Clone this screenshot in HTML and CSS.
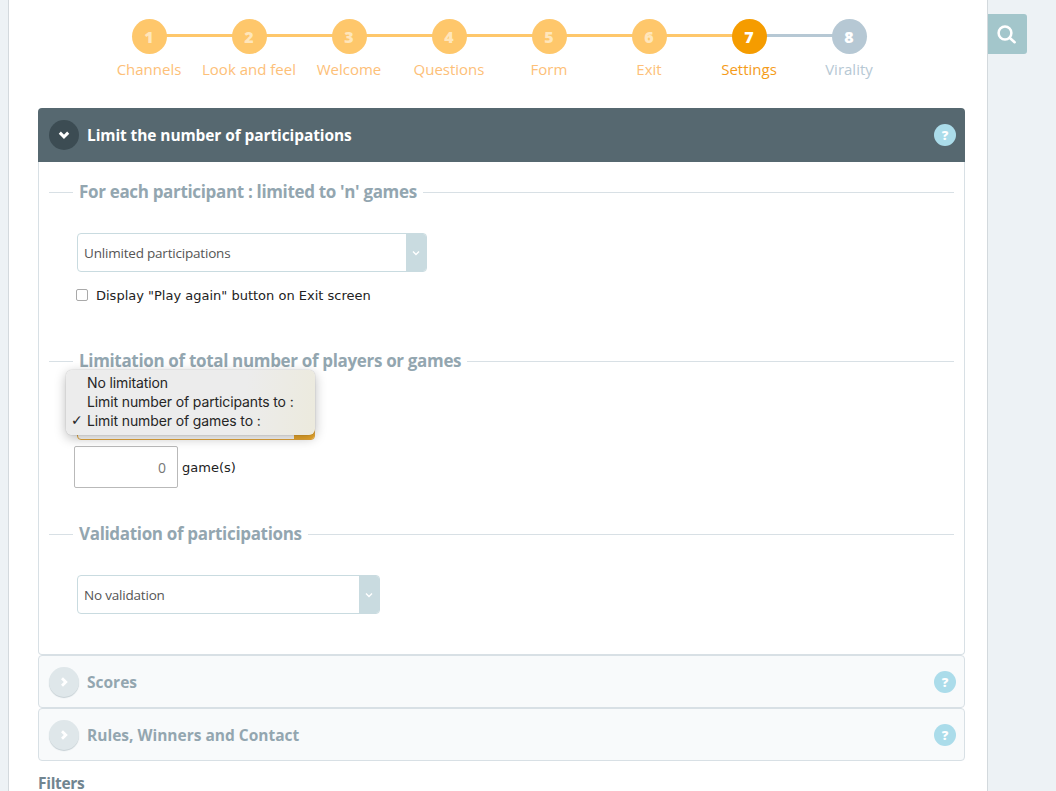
FILE: index.html
```html
<!DOCTYPE html>
<html lang="en">
<head>
<meta charset="utf-8">
<title>Settings</title>
<link rel="stylesheet" href="styles.css">
</head>
<body>
<div class="page">
  <div class="gutter"></div>
  <main class="main">
    <nav class="stepper">
      <div class="step done"><span class="line"></span><span class="dot">1</span><span class="label">Channels</span></div>
      <div class="step done"><span class="line"></span><span class="dot">2</span><span class="label">Look and feel</span></div>
      <div class="step done"><span class="line"></span><span class="dot">3</span><span class="label">Welcome</span></div>
      <div class="step done"><span class="line"></span><span class="dot">4</span><span class="label">Questions</span></div>
      <div class="step done"><span class="line"></span><span class="dot">5</span><span class="label">Form</span></div>
      <div class="step done"><span class="line"></span><span class="dot">6</span><span class="label">Exit</span></div>
      <div class="step active"><span class="line"></span><span class="dot">7</span><span class="label">Settings</span></div>
      <div class="step todo"><span class="dot">8</span><span class="label">Virality</span></div>
    </nav>

    <section class="panel-head open">
      <span class="toggle toggle-open"><svg width="12" height="12" viewBox="0 0 12 12"><path d="M1.8 3.6l4.2 4.2 4.2-4.2" fill="none" stroke="#fff" stroke-width="3"/></svg></span>
      <h2 class="panel-title">Limit the number of participations</h2>
      <span class="help">?</span>
    </section>
    <section class="panel-body">
      <div class="legend"><span class="rule short"></span><h3 class="legend-text">For each participant : limited to 'n' games</h3><span class="rule"></span></div>
      <div class="select select-a"><span class="select-text">Unlimited participations</span><span class="arrow"><svg width="8" height="8" viewBox="0 0 8 8"><path d="M1 2.5l3 3 3-3" fill="none" stroke="#fff" stroke-width="1.4"/></svg></span></div>
      <label class="check"><input type="checkbox" class="box"><span>Display "Play again" button on Exit screen</span></label>

      <div class="legend legend-2"><span class="rule short"></span><h3 class="legend-text">Limitation of total number of players or games</h3><span class="rule"></span></div>
      <div class="limit">
        <div class="select select-b"><span class="arrow arrow-b"></span></div>
        <ul class="menu">
          <li>No limitation</li>
          <li>Limit number of participants to :</li>
          <li class="checked">Limit number of games to :</li>
        </ul>
      </div>
      <div class="games"><span class="number">0</span><span class="unit">game(s)</span></div>

      <div class="legend legend-3"><span class="rule short"></span><h3 class="legend-text">Validation of participations</h3><span class="rule"></span></div>
      <div class="select select-c"><span class="select-text">No validation</span><span class="arrow"><svg width="8" height="8" viewBox="0 0 8 8"><path d="M1 2.5l3 3 3-3" fill="none" stroke="#fff" stroke-width="1.4"/></svg></span></div>
    </section>

    <section class="panel-closed">
      <span class="toggle toggle-closed"><svg width="10" height="10" viewBox="0 0 10 10"><path d="M3 1.2l3.8 3.8-3.8 3.8" fill="none" stroke="#fff" stroke-width="2.8"/></svg></span>
      <h2 class="closed-title">Scores</h2>
      <span class="help">?</span>
    </section>
    <section class="panel-closed">
      <span class="toggle toggle-closed"><svg width="10" height="10" viewBox="0 0 10 10"><path d="M3 1.2l3.8 3.8-3.8 3.8" fill="none" stroke="#fff" stroke-width="2.8"/></svg></span>
      <h2 class="closed-title">Rules, Winners and Contact</h2>
      <span class="help">?</span>
    </section>
    <h2 class="filters">Filters</h2>
  </main>
  <aside class="side">
    <button class="search" type="button"><svg width="20" height="20" viewBox="0 0 20 20"><circle cx="9" cy="9" r="6.4" fill="none" stroke="#fff" stroke-width="2.5"/><path d="M13.6 13.8l5 4.4" fill="none" stroke="#fff" stroke-width="2.6" stroke-linecap="round"/></svg></button>
  </aside>
</div>
</body>
</html>
```
FILE: styles.css
```css
* { box-sizing: border-box; }
html, body { margin: 0; height: 100%; overflow: hidden; }
body { font-family: "Open Sans", sans-serif; background: #edf2f5; color: #333; }
h2, h3, ul { margin: 0; padding: 0; }

.page { display: flex; height: 791px; overflow: hidden; }
.gutter { width: 8px; flex: none; }
.main {
  width: 980px; flex: none; background: #fff;
  border-left: 1px solid #d3d9dd; border-right: 1px solid #d3d9dd;
  padding: 19px 22px 0 29px;
}
.side { flex: 1; padding-top: 14px; }
.search {
  display: flex; align-items: center; justify-content: center;
  width: 39px; height: 40px; padding: 0 3px 0 0; border: 0;
  background: #a3c6cb; border-radius: 0 3px 3px 0;
}

/* stepper */
.stepper { display: flex; padding-left: 61px; height: 89px; }
.step { position: relative; width: 100px; display: flex; flex-direction: column; align-items: center; }
.dot {
  position: relative; width: 35px; height: 35px; border-radius: 50%;
  display: flex; align-items: center; justify-content: center;
  color: #fff; font-weight: 800; font-size: 16px;
}
.line { position: absolute; left: 50px; top: 15px; width: 100px; height: 3px; }
.label { margin-top: 5px; font-size: 15px; line-height: 20px; white-space: nowrap; }
.done .dot { background: #fec76b; color: #ffe6bb; }
.done .line { background: #fec76b; }
.done .label { color: #fdc078; }
.active .dot { background: #f59c00; }
.active .line { background: #b6c8d4; }
.active .label { color: #f59c1a; }
.todo .dot { background: #b6c8d4; }
.todo .label { color: #b6c8d4; }

/* panels */
.panel-head {
  height: 54px; display: flex; align-items: center;
  background: #566870; border-radius: 4px 4px 0 0; padding: 0 9px 0 11px;
}
.toggle { flex: none; width: 30px; height: 30px; border-radius: 50%; display: flex; align-items: center; justify-content: center; }
.toggle-open { background: #3c4c53; }
.panel-title { flex: 1; margin-left: 8px; color: #fff; font-size: 15.5px; font-weight: 700; letter-spacing: -0.1px; }
.help {
  flex: none; width: 22px; height: 22px; border-radius: 50%;
  background: #abdcea; color: #fff; font-size: 13px; font-weight: 800;
  display: flex; align-items: center; justify-content: center;
}
.panel-body {
  height: 493px; padding: 19px 10px 0 10px;
  border: 1px solid #d8e0e5; border-top: 0; border-radius: 0 0 4px 4px;
}
.legend { display: flex; align-items: center; height: 22px; }
.legend-2 { margin-top: 45px; }
.legend-3 { margin-top: 35px; }
.rule { flex: 1; height: 1px; background: #d8e0e5; }
.rule.short { flex: none; width: 24px; }
.legend-text { margin: 0 6px 2px 6px; color: #93a6b0; font-size: 17px; font-weight: 700; white-space: nowrap; letter-spacing: -0.33px; }

.select {
  position: relative; display: flex; align-items: center; justify-content: space-between;
  margin-left: 28px; height: 39px; border: 1px solid #c9dbe0; border-radius: 4px; background: #fff;
  overflow: hidden;
}
.select-a { width: 350px; margin-top: 30px; }
.select-c { width: 303px; margin-top: 30px; }
.select-text { padding-left: 6px; font-size: 13.5px; color: #555; letter-spacing: -0.2px; }
.arrow { width: 20px; height: 100%; background: #c9dbe0; display: flex; align-items: center; justify-content: center; flex: none; }

.check { display: flex; align-items: center; margin: 13px 0 0 27px; height: 20px; font-family: "DejaVu Sans", sans-serif; font-size: 13px; color: #222; }
.box {
  appearance: none; width: 12px; height: 12px; margin: 0 8px 0 0;
  background: #fff; border: 1px solid #a9a9a9; border-radius: 2px;
}

.limit { position: relative; height: 74px; margin-top: 0; }
.select-b {
  position: absolute; left: 0; top: 48px; width: 238px; height: 20px;
  border-color: #e5a73b; justify-content: flex-end;
}
.arrow-b { background: #edaa2c; }
.menu {
  position: absolute; left: 17px; top: -2px; width: 249px; height: 65px;
  list-style: none; padding: 3px 0 0 21px;
  background: linear-gradient(100deg, #ececec 70%, #eceadd);
  border-radius: 6px; box-shadow: 0 3px 12px rgba(0,0,0,.28), 0 0 1px rgba(0,0,0,.4);
  font-family: Inter, sans-serif; font-size: 14px; line-height: 19px; color: #262626;
}
.menu li { position: relative; white-space: nowrap; letter-spacing: -0.12px; }
.checked::before { content: "✓"; position: absolute; left: -16px; top: 0; font-family: "DejaVu Sans", sans-serif; font-size: 14px; font-weight: 700; }

.games { display: flex; align-items: center; margin: 0 0 0 25px; }
.number {
  width: 104px; height: 42px; border: 1px solid #b9b9b9; border-radius: 2px;
  display: flex; align-items: center; justify-content: flex-end; padding-right: 11px;
  font-size: 14px; color: #777;
}
.unit { margin-left: 4px; font-family: "DejaVu Sans", sans-serif; font-size: 13px; color: #222; }

.panel-closed {
  height: 53px; display: flex; align-items: center; background: #f8fafb;
  border: 1px solid #d8e0e5; border-radius: 4px; padding: 0 8px 0 10px;
}
.toggle-closed { background: #dfe7ea; box-shadow: 0 1px 1px #c5cfd4; }
.closed-title { flex: 1; margin-left: 8px; color: #93a6b0; font-size: 15.5px; font-weight: 700; }
.filters { margin-top: 11px; font-size: 15.5px; font-weight: 700; color: #718590; letter-spacing: -0.3px; }
```
